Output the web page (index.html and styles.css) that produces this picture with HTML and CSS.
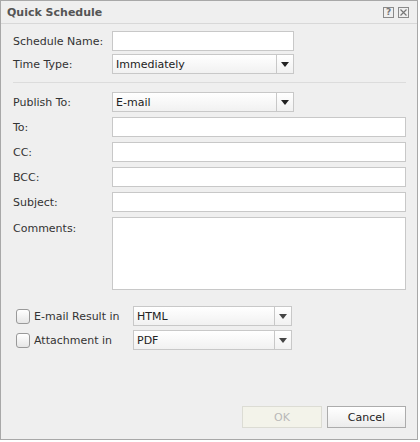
FILE: index.html
```html
<!DOCTYPE html>
<html>
<head>
<meta charset="utf-8">
<link rel="stylesheet" href="styles.css">
</head>
<body>
<div class="dialog">
  <div class="titlebar">
    <span class="title">Quick Schedule</span>
    <span class="tools">
      <span class="tool help">?</span>
      <span class="tool close"><svg width="9" height="9" viewBox="0 0 9 9"><path d="M1.5 1.5 L7.5 7.5 M7.5 1.5 L1.5 7.5" stroke="#777" stroke-width="1.2" fill="none"/></svg></span>
    </span>
  </div>
  <div class="form">
    <div class="row r1"><label class="lbl">Schedule Name:</label><input class="field short" type="text"></div>
    <div class="row r2"><label class="lbl">Time Type:</label><div class="select short"><span class="val">Immediately</span><span class="btn"><svg width="8" height="5" viewBox="0 0 8 5"><polygon points="0,0 8,0 4,5" fill="#222"/></svg></span></div></div>
    <div class="sep"></div>
    <div class="row r3"><label class="lbl">Publish To:</label><div class="select short"><span class="val">E-mail</span><span class="btn"><svg width="8" height="5" viewBox="0 0 8 5"><polygon points="0,0 8,0 4,5" fill="#222"/></svg></span></div></div>
    <div class="row"><label class="lbl">To:</label><input class="field" type="text"></div>
    <div class="row"><label class="lbl">CC:</label><input class="field" type="text"></div>
    <div class="row"><label class="lbl">BCC:</label><input class="field" type="text"></div>
    <div class="row"><label class="lbl">Subject:</label><input class="field" type="text"></div>
    <div class="row tall"><label class="lbl">Comments:</label><div class="area"></div></div>
    <div class="crow c1"><span class="check"></span><span class="clbl">E-mail Result in</span><div class="select fmt"><span class="val">HTML</span><span class="btn"><svg width="8" height="5" viewBox="0 0 8 5"><polygon points="0,0 8,0 4,5" fill="#444"/></svg></span></div></div>
    <div class="crow c2"><span class="check"></span><span class="clbl">Attachment in</span><div class="select fmt"><span class="val">PDF</span><span class="btn"><svg width="8" height="5" viewBox="0 0 8 5"><polygon points="0,0 8,0 4,5" fill="#444"/></svg></span></div></div>
  </div>
  <div class="footer">
    <button class="button ok" disabled>OK</button>
    <button class="button cancel">Cancel</button>
  </div>
</div>
</body>
</html>
```
FILE: styles.css
```css
html, body {
  margin: 0;
  padding: 0;
  background: #ffffff;
}
body {
  font-family: "DejaVu Sans", Verdana, sans-serif;
  font-size: 11px;
  color: #333;
}
.dialog {
  box-sizing: border-box;
  width: 418px;
  height: 440px;
  border: 1px solid #a8a8a8;
  background: #efefef;
  display: flex;
  flex-direction: column;
}
.titlebar {
  height: 22px;
  border-bottom: 1px solid #d8d8d8;
  display: flex;
  align-items: center;
  justify-content: space-between;
  padding: 0 8px 0 6px;
}
.title {
  font-weight: bold;
  color: #555;
  font-size: 11px;
}
.tools {
  display: flex;
  gap: 4px;
  margin-top: 1px;
}
.tool {
  box-sizing: border-box;
  width: 11px;
  height: 11px;
  border: 1px solid #8a8a8a;
  display: flex;
  align-items: center;
  justify-content: center;
  font-size: 9px;
  line-height: 9px;
  color: #777;
  font-weight: bold;
}
.form {
  padding: 0 11px 0 12px;
  display: flex;
  flex-direction: column;
}
.row {
  display: flex;
  align-items: center;
  height: 20px;
  margin-top: 5px;
}
.row.r1 { margin-top: 7px; }
.row.r2 { margin-top: 3px; }
.row.r3 { margin-top: 9px; }
.row.tall {
  height: 73px;
  align-items: flex-start;
}
.row.tall .lbl { margin-top: 5px; }
.lbl {
  width: 99px;
  flex: none;
  color: #333;
}
.field {
  box-sizing: border-box;
  -webkit-appearance: none;
  appearance: none;
  height: 20px;
  flex: 1;
  margin: 0;
  border: 1px solid #c8c8c8;
  background: #fff;
  border-radius: 0;
  padding: 0 3px;
  outline: none;
}
.field.short {
  flex: none;
  width: 182px;
}
.area {
  box-sizing: border-box;
  flex: 1;
  height: 73px;
  border: 1px solid #c8c8c8;
  background: #fff;
}
.sep {
  height: 1px;
  background: #dcdcdc;
  margin-top: 8px;
}
.select {
  box-sizing: border-box;
  height: 20px;
  border: 1px solid #c8c8c8;
  background: linear-gradient(#ffffff, #f1f1f1);
  display: flex;
  align-items: center;
}
.select.short { width: 182px; }
.select .val {
  flex: 1;
  padding-left: 3px;
  color: #222;
}
.select .btn {
  width: 16px;
  height: 100%;
  border-left: 1px solid #c8c8c8;
  display: flex;
  align-items: center;
  justify-content: center;
}
.crow {
  display: flex;
  align-items: center;
  height: 20px;
  padding-left: 3px;
}
.crow.c1 { margin-top: 16px; }
.crow.c2 { margin-top: 4px; }
.check {
  box-sizing: border-box;
  width: 14px;
  height: 15px;
  border: 1px solid #999;
  border-radius: 3px;
  background: linear-gradient(#ffffff, #e6e6e6);
  flex: none;
}
.clbl {
  width: 99px;
  padding-left: 4px;
  flex: none;
}
.select.fmt { width: 159px; }
.select.fmt .val { padding-left: 3px; }
.footer {
  margin-top: auto;
  padding: 0 11px 11px 0;
  display: flex;
  justify-content: flex-end;
  gap: 5px;
}
.button {
  box-sizing: border-box;
  height: 22px;
  width: 79px;
  font-family: "DejaVu Sans", Verdana, sans-serif;
  font-size: 11px;
  border-radius: 0;
  margin: 0;
}
.button.ok {
  width: 80px;
  border: 1px solid #dcdcd4;
  background: #f3f3ea;
  color: #b8b8b8;
}
.button.cancel {
  border: 1px solid #acacac;
  background: linear-gradient(#ffffff, #ececec);
  color: #222;
}
```
